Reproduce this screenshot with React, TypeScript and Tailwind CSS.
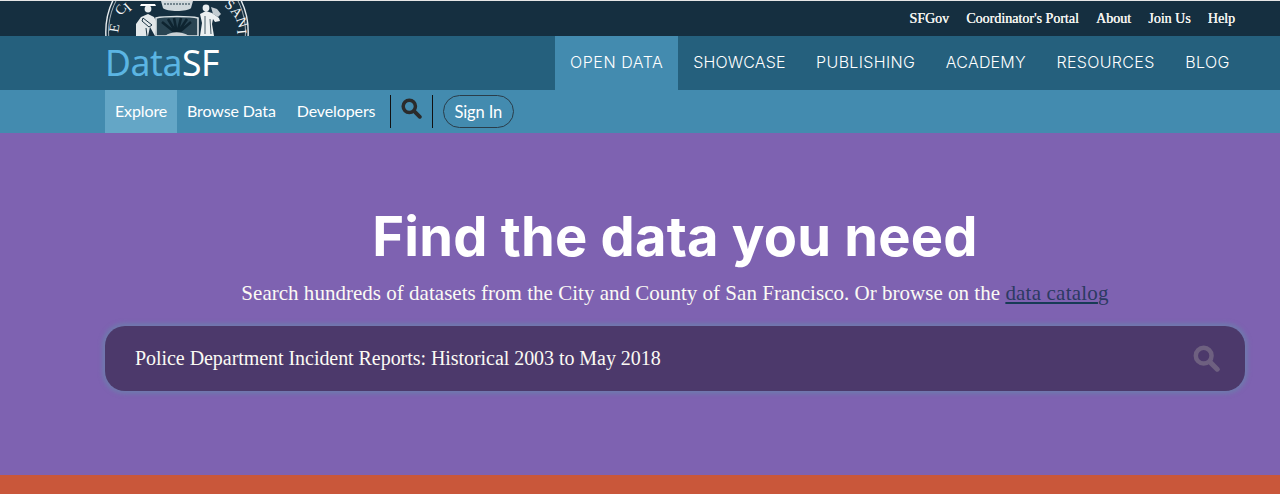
import React from "react";

function Search({ className }: { className: string }) {
  return (
    <svg viewBox="0 0 24 24" className={className} fill="none" stroke="currentColor">
      <circle cx="9.5" cy="9.5" r="7" strokeWidth="4" />
      <path d="M15 15l6.5 6.5" strokeWidth="4.4" strokeLinecap="round" />
    </svg>
  );
}

function Seal() {
  return (
    <svg viewBox="0 0 145 35" className="w-[145px] h-[35px] shrink-0" fill="none">
      <circle cx="72" cy="31" r="71.2" stroke="#e5ebee" strokeWidth="1.4" />
      <circle cx="72" cy="31" r="68.5" stroke="#e5ebee" strokeWidth="0.7" />
      <g fill="#f2f5f6" fontSize="14" fontFamily="'Liberation Serif', serif">
        <text transform="translate(13 32) rotate(-80)">E</text>
        <text transform="translate(17 15) rotate(-58)">C</text>
        <text transform="translate(24 11) rotate(-42)">I</text>
        <text transform="translate(119 5) rotate(38)">S</text>
        <text transform="translate(125 10) rotate(52)">A</text>
        <text transform="translate(131 18) rotate(72)">N</text>
        <text transform="translate(132 29) rotate(84)">I</text>
      </g>
      {/* miner */}
      <g transform="translate(4 0)">
        <path d="M32 3h14l1 2h-16z" fill="#fff" />
        <circle cx="39" cy="8" r="3.4" fill="#e8edef" />
        <path d="M27 35l0-12 5-7 7-3 6 3 4 8-2 4-1 7-5-9-2 9z" fill="#e3e8ea" />
        <path d="M34 17l9 7-3 2-7-6zM37 27l1 8" stroke="#1a3443" strokeWidth="1" />
      </g>
      {/* crown */}
      <path d="M56 0h32l-2 7c-3 4-25 4-28 0z" fill="#cfd7db" />
      <path d="M59 3h26" stroke="#1a3443" strokeWidth="1.2" strokeDasharray="2 1" />
      {/* shield */}
      <path d="M51 35V17c8-2 34-2 42 0v18z" fill="#2a4553" stroke="#d9e0e3" strokeWidth="1.6" />
      <path d="M72 33L57 21M72 33l-9-15M72 33l-3-16M72 33l4-16M72 33l10-15M72 33l14-12" stroke="#0e2430" strokeWidth="2.6" />
      <path d="M60 35c6-5 17-5 24 0z" fill="#c9d1d5" />
      {/* sailor */}
      <circle cx="101" cy="7" r="3.4" fill="#e8edef" />
      <path d="M95 13l6-3 6 2 3 2 4 3 1 3-5 1-2-3-1 5 2 12H95l2-13z" fill="#ecf0f1" />
      <path d="M106 6l6 2 4 5-3 3-5-3z" fill="#c3ccd1" />
      <path d="M100 15v18M105 18l1 15" stroke="#1a3443" strokeWidth="0.8" />
    </svg>
  );
}

export default function App() {
  const main = [
    { t: "SHOWCASE", c: "h-full px-[15.3px] tracking-[0.1px]" },
    { t: "PUBLISHING", c: "h-full px-[15.3px] tracking-[0.35px]" },
    { t: "ACADEMY", c: "h-full px-[15.3px] tracking-[0.2px]" },
    { t: "RESOURCES", c: "h-full px-[15.3px] tracking-[0.35px]" },
    { t: "BLOG", c: "h-full px-[15.3px] tracking-[0.35px]" },
  ];
  const top = ["SFGov", "Coordinator's Portal", "About", "Join Us", "Help"];
  return (
    <div className="w-[1280px] h-[494px] overflow-hidden flex flex-col bg-[#7e62b1] font-['Lato',sans-serif]">
      <div className="h-px bg-[#e6e6e6] shrink-0" />
      <header className="h-[35px] shrink-0 bg-[#152f40] flex items-center justify-between pl-[105px] pr-[45px] overflow-hidden">
        <Seal />
        <nav className="flex gap-[17.2px] text-[14px] text-[#f4f4f0] font-['Liberation_Serif',serif] [text-shadow:0.3px_0_0_#f4f4f0]">
          {top.map((t) => <span key={t}>{t}</span>)}
        </nav>
      </header>
      <div className="h-[54px] shrink-0 bg-[#25607d] flex justify-between pl-[105px] pr-[35px]">
        <div className="text-[35.5px] leading-[52px] font-['Noto_Sans',sans-serif] text-[#5bb5e3] tracking-[-0.4px]">
          Data<span className="text-white">SF</span>
        </div>
        <nav className="flex text-[16px] leading-[52px] text-white font-['Inter',sans-serif] font-light whitespace-nowrap">
          <span className="h-full px-[15px] w-[123px] bg-[#438baf] tracking-[0.55px]">OPEN DATA</span>
          {main.map((m) => <span key={m.t} className={m.c}>{m.t}</span>)}
        </nav>
      </div>
      <div className="h-[43px] shrink-0 bg-[#438baf] flex pl-[105px] text-[16px] leading-[41px] text-white tracking-[-0.12px]">
        <span className="h-full px-[10px] w-[72px] bg-[#64a6c6]">Explore</span>
        <span className="h-full ml-[10px]">Browse Data</span>
        <span className="h-full ml-[21px]">Developers</span>
        <span className="w-px h-[33px] bg-[#111] mt-[5px] ml-[14.5px]" />
        <Search className="w-[21px] h-[21px] text-[#2b2b2b] mt-[8px] ml-[10px]" />
        <span className="w-px h-[33px] bg-[#111] mt-[5px] ml-[10px]" />
        <span className="h-[33px] w-[71px] mt-[5px] ml-[10px] rounded-full border border-[#2a3d4a] flex items-center justify-center pt-[1px] text-[16.5px]">Sign In</span>
      </div>
      <main className="h-[342px] shrink-0 flex flex-col items-center pl-[70px]">
        <h1 className="mt-[70px] text-[54.3px] leading-[66px] font-bold text-white font-['Inter',sans-serif] tracking-[0.2px]">
          Find the data you need
        </h1>
        <p className="mt-[10px] text-[21px] leading-[28px] text-[#fbfaf4] font-['Liberation_Serif',serif] tracking-[0.02px]">
          Search hundreds of datasets from the City and County of San Francisco. Or browse on the{" "}
          <span className="text-[#2c3a62] tracking-[0.2px]"><span className="underline underline-offset-2 decoration-[#173a55] decoration-2">data catalo</span>g</span>
        </p>
        <div className="mt-[19px] w-[1140px] h-[65px] rounded-[20px] bg-[#4c396b] shadow-[0_0_4px_3px_rgba(102,136,170,0.6)] flex items-center justify-between pl-[30px] pr-[25px]">
          <span className="text-[20px] pb-[2px] text-[#fbfaf4] font-['Liberation_Serif',serif] tracking-[-0.05px]">
            Police Department Incident Reports: Historical 2003 to May 2018
          </span>
          <Search className="w-[27px] h-[27px] text-[#6e6080]" />
        </div>
      </main>
      <div className="flex-1 bg-[#c9573a]" />
    </div>
  );
}
